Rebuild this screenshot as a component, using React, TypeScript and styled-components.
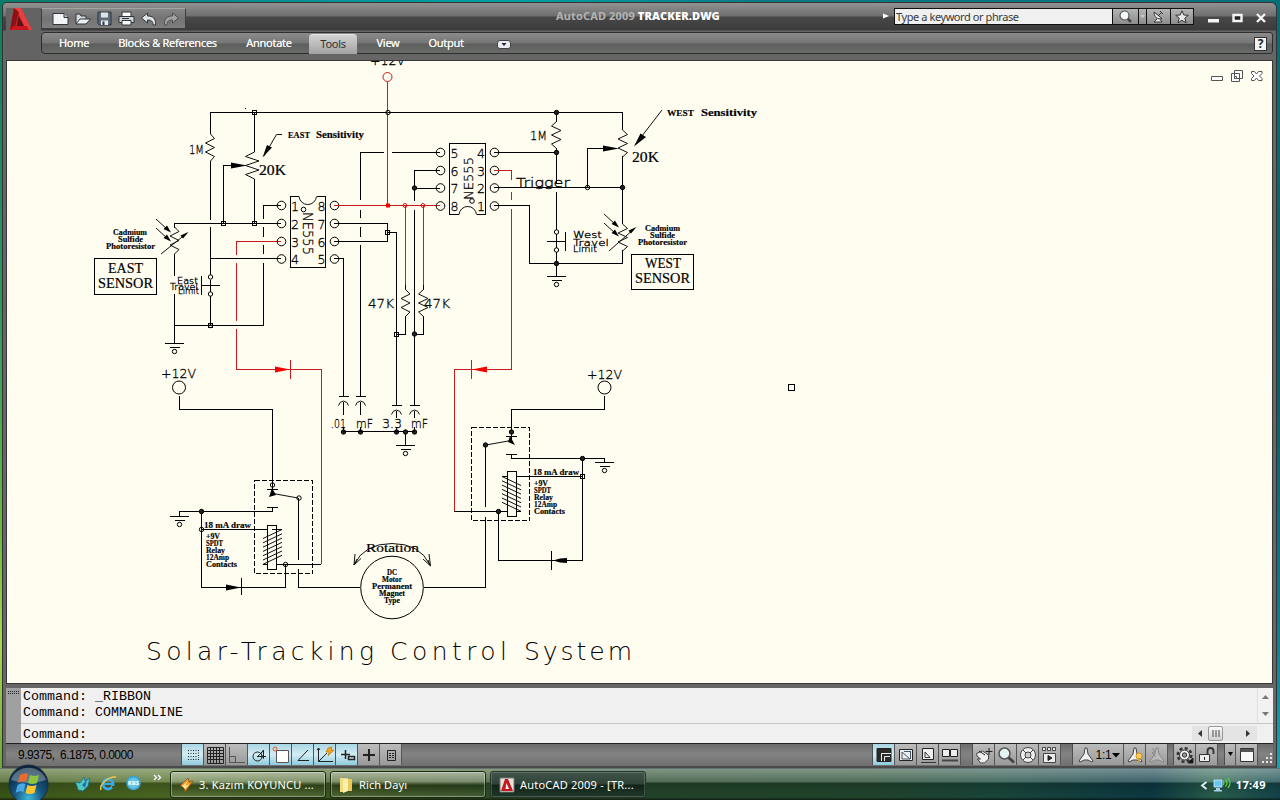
import React from 'react';
import styled, { createGlobalStyle, css } from 'styled-components';

const GlobalStyle = createGlobalStyle`
  * { box-sizing: border-box; }
  html, body { margin: 0; padding: 0; }
  body { width: 1280px; height: 800px; overflow: hidden; font-family: "Noto Sans", "Liberation Sans", sans-serif; }
`;

const Desktop = styled.div`
  width: 1280px;
  height: 800px;
  display: flex;
  flex-direction: column;
  background: linear-gradient(90deg, #0c7a68 0, #07898b 15%, #00a0a4 40%, #067a84 60%, #04707a 100%);
`;

const WindowRow = styled.div`
  flex: 1;
  display: flex;
  min-height: 0;
  padding-top: 2px;
`;

const LeftEdge = styled.div`
  width: 2px;
  background: linear-gradient(180deg, #0b7d60 0, #2a9a63 40%, #6dbb3f 70%, #a8d850 84%, #6fa83a 100%);
`;

const RightEdge = styled.div`
  width: 3px;
  background: linear-gradient(180deg, #04707a 0, #05606c 50%, #0a7c8c 80%, #1aa3ae 100%);
`;

const AppWindow = styled.div`
  flex: 1;
  min-width: 0;
  display: flex;
  flex-direction: column;
  background: #666;
  border: 1px solid #333;
  border-bottom: 2px solid #4a4a4a;
  border-radius: 5px 6px 0 0;
  padding: 0 3px;
`;

const Header = styled.div`
  height: 57px;
  display: flex;
  margin: 0 -3px;
  padding-left: 3px;
  background: linear-gradient(180deg, #929292 0, #6f6f6f 13px, #484848 14px, #3b3b3b 27px, #666 28px, #666 100%);
  border-radius: 4px 5px 0 0;
`;

const LogoCell = styled.div`
  width: 35px;
  height: 52px;
  margin-top: 5px;
  padding-left: 1px;
  background: #636363;
`;

const HeaderMain = styled.div`
  flex: 1;
  display: flex;
  flex-direction: column;
`;

const TitleBar = styled.div`
  height: 29px;
  display: flex;
  align-items: flex-start;
  padding: 5px 0 0 0;
`;

const QuickAccess = styled.div`
  width: 145px;
  height: 21px;
  display: flex;
  align-items: center;
  gap: 6px;
  padding-left: 10px;
  background: linear-gradient(180deg, #868686, #747474 50%, #7e7e7e);
  border: 1px solid #3e3e3e;
  border-top-color: #a5a5a5;
`;

const Glyph = styled.svg<{ $w: number; $h: number }>`
  width: ${p => p.$w}px;
  height: ${p => p.$h}px;
  display: block;
  flex: none;
  overflow: visible;
`;

const WindowTitle = styled.div`
  width: 166px;
  margin-left: 370px;
  font: bold 11px/15px "Noto Sans", sans-serif;
  letter-spacing: 0.14px;
  white-space: nowrap;
  color: #b4b4b4;
  b { color: #fff; }
`;

const SearchArrow = styled.div`
  margin: 5px 0 0 161px;
  width: 11px;
`;

const SearchBox = styled.div`
  height: 17px;
  display: flex;
  border: 1px solid #111;
  background: #111;
  gap: 1px;
`;

const SearchField = styled.div`
  width: 217px;
  background: #f0f0f0;
  padding-left: 1px;
  color: #3a3a3a;
  font: 11px/15px "Noto Sans", sans-serif;
  letter-spacing: -0.42px;
`;

const SearchButton = styled.div<{ $w: number }>`
  width: ${p => p.$w}px;
  display: flex;
  align-items: center;
  justify-content: center;
  background: linear-gradient(180deg, #b5b5b5, #8c8c8c);
`;

const CaptionButtons = styled.div`
  display: flex;
  gap: 13px;
  align-items: center;
  padding: 5px 0 0 14px;
`;

const TabBar = styled.div`
  height: 22px;
  display: flex;
  align-items: stretch;
  margin-right: 3px;
  border: 1px solid #2e2e2e;
  border-radius: 4px 3px 3px 4px;
  background: linear-gradient(180deg, #8b8b8b 0, #757575 10px, #5c5f5c 11px, #686b68 100%);
`;

const Tab = styled.div<{ $w: number; $active?: boolean }>`
  width: ${p => p.$w}px;
  text-align: center;
  font: 11px/19px "Noto Sans", sans-serif;
  letter-spacing: -0.28px;
  white-space: nowrap;
  color: #f5f5f5;
  text-shadow: 0 0 0.5px #fff;
  ${p => p.$active && css`
    color: #333;
    text-shadow: none;
    margin: 1px 0 -1px;
    line-height: 17px;
    border-radius: 4px 4px 0 0;
    background: linear-gradient(180deg, #d2d2d2, #a3a3a3);
    border-top: 1px solid #e6e6e6;
  `}
`;

const TabMenu = styled.div`
  margin: 7px 0 0 24px;
  width: 13px;
`;

const HelpSlot = styled.div`
  margin: 4px 5px 0 auto;
`;

const Canvas = styled.div`
  height: 624px;
  background: #fffcf0;
  border: 1px solid #383838;
  margin-bottom: 4px;
`;

const Sheet = styled.svg`
  display: block;
  width: 1265px;
  height: 622px;
`;

const CommandPanel = styled.div`
  height: 55px;
  display: flex;
  background: #f0f0f0;
`;

const CommandGrip = styled.div`
  width: 15px;
  background: #a0a0a0;
  padding: 2px 0 0 2px;
`;

const CommandBody = styled.div`
  flex: 1;
  display: flex;
  flex-direction: column;
`;

const mono = css`
  font: 13.33px/16px "Liberation Mono", monospace;
  color: #000;
  white-space: pre;
`;

const CommandHistory = styled.div`
  height: 37px;
  display: flex;
  justify-content: space-between;
  border-bottom: 1px solid #c6c6c6;
`;

const HistoryText = styled.div`
  ${mono}
  padding: 1px 0 0 2px;
`;

const CommandInput = styled.div`
  flex: 1;
  ${mono}
  display: flex;
  justify-content: space-between;
  padding: 3px 0 0 2px;
`;

const VScroll = styled.div`
  width: 16px;
  display: flex;
  flex-direction: column;
  justify-content: space-between;
  align-items: center;
  padding: 7px 0;
  border-left: 1px solid #e0e0e0;
  background: #f2f2f2;
`;

const HScroll = styled.div`
  width: 65px;
  height: 15px;
  margin: -1px 16px 0 0;
  display: flex;
  align-items: center;
  padding: 0 7px 0 6px;
  background: #e4e4e4;
`;

const HThumb = styled.div`
  width: 15px;
  height: 15px;
  margin: 0 auto 0 6px;
  border: 1px solid #999;
  border-radius: 2px;
  background: linear-gradient(180deg, #fafafa, #d0d0d0);
  display: flex;
  justify-content: center;
  align-items: center;
`;

const StatusBar = styled.div`
  height: 23px;
  display: flex;
  align-items: flex-start;
  border-top: 1px solid #222;
  background: linear-gradient(180deg, #6c6c6c, #838383 45%, #707070);
`;

const Coordinates = styled.div`
  width: 175px;
  padding: 3px 0 0 12px;
  font: 12px/17px "Liberation Sans", sans-serif;
  letter-spacing: -0.52px;
  white-space: pre;
  color: #000;
`;

const StatusGroup = styled.div<{ $gap: number }>`
  display: flex;
  margin-left: ${p => p.$gap}px;
  border-left: 1px solid #4e4e4e;
`;

const StatusButton = styled.div<{ $on?: boolean; $w?: number }>`
  width: ${p => p.$w ?? 22}px;
  height: 21px;
  display: flex;
  align-items: center;
  justify-content: center;
  font: 12px/20px "Liberation Sans", sans-serif;
  letter-spacing: -0.3px;
  border-right: 1px solid #555;
  background: ${p => p.$on ? 'linear-gradient(180deg, #a9d6e4, #d3edf4 50%, #8ecbdd)' : 'linear-gradient(180deg, #bcbcbc, #9a9a9a)'};
`;

const ResizeGrip = styled.div`
  margin: 9px 0 0 3px;
`;

const Taskbar = styled.div`
  height: 32px;
  display: flex;
  align-items: stretch;
  background:
    linear-gradient(180deg, #41505a 0, rgba(255,255,255,.42) 1px, rgba(255,255,255,.2) 14px, rgba(0,0,0,.22) 15px, rgba(0,0,0,.05) 29px, rgba(0,0,0,.6) 32px),
    linear-gradient(90deg, #3c591a 0, #4d6b23 12%, #3a561d 30%, #26482c 50%, #23482f 68%, #1b4a3e 78%, #0d3b45 90%, #2b6350 95%, #14474e 100%);
`;

const StartSlot = styled.div`
  width: 57px;
  padding-left: 8px;
  margin-top: -4px;
  z-index: 1;
`;

const QuickLaunch = styled.div`
  width: 113px;
  display: flex;
  gap: 9px;
  padding: 7px 0 0 17px;
`;

const TaskButton = styled.div<{ $active?: boolean; $ls?: number }>`
  width: 156px;
  height: 27px;
  margin: 3px 4px 0 0;
  padding: 0 0 0 8px;
  display: flex;
  align-items: center;
  gap: 5px;
  color: #fff;
  font: 11px/20px "Noto Sans", sans-serif;
  letter-spacing: ${p => p.$ls ?? 0}px;
  white-space: nowrap;
  border: 1px solid ${p => p.$active ? '#26352a' : '#182b10'};
  box-shadow: inset 0 0 0 1px ${p => p.$active ? 'rgba(255,255,255,.18)' : 'rgba(255,255,255,.35)'};
  border-radius: 3px;
  background: ${p => p.$active
    ? 'linear-gradient(180deg, #415448 0, #30433a 12px, #122318 13px, #20382a 100%)'
    : 'linear-gradient(180deg, rgba(255,255,255,.3) 0, rgba(255,255,255,.14) 12px, rgba(0,0,0,.15) 13px, rgba(255,255,255,.1) 100%)'};
`;

const Tray = styled.div`
  margin-left: auto;
  padding: 2px 14px 0 0;
  display: flex;
  align-items: center;
  gap: 5px;
  color: #fff;
  font: bold 11px/18px "Noto Sans", sans-serif;
  letter-spacing: 0.4px;
`;

/* ---------- schematic primitives ---------- */

const Ink = styled.path<{ $red?: boolean; $dash?: boolean }>`
  fill: none;
  stroke: ${p => (p.$red ? '#c8191c' : '#000')};
  stroke-width: 1;
  shape-rendering: crispEdges;
  stroke-dasharray: ${p => (p.$dash ? '5 2' : 'none')};
`;

const Slant = styled.path`
  fill: none;
  stroke: #111;
  stroke-width: 1;
`;

const Solid = styled.path<{ $red?: boolean }>`
  fill: ${p => (p.$red ? '#f40000' : '#000')};
`;

const Ring = styled.circle<{ $red?: boolean; $fill?: boolean }>`
  fill: ${p => (p.$fill ? '#222' : 'none')};
  stroke: ${p => (p.$red ? '#c8191c' : '#000')};
  stroke-width: 1;
`;

type Face = 'stroke' | 'serif' | 'bold' | 'title';

const Lettering = styled.text<{ $face: Face; $size: number }>`
  font-size: ${p => p.$size}px;
  fill: #000;
  ${p => p.$face === 'stroke' && css`font-family: "DejaVu Sans Light", "DejaVu Sans", sans-serif; font-weight: 200; stroke: #000; stroke-width: 0.3px;`}
  ${p => p.$face === 'title' && css`font-family: "DejaVu Sans Light", "DejaVu Sans", sans-serif; font-weight: 200;`}
  ${p => p.$face === 'serif' && css`font-family: "Liberation Serif", serif; stroke: #000; stroke-width: 0.2px;`}
  ${p => p.$face === 'bold' && css`font-family: "Liberation Serif", serif; font-weight: 700; stroke: #000; stroke-width: 0.15px;`}
`;

interface LabelProps { x: number; y: number; w: number; s: number; face?: Face; rot?: number; children: string; }

const Label = ({ x, y, w, s, face = 'stroke', rot, children }: LabelProps) => (
  <Lettering $face={face} $size={s} x={x} y={y} textLength={w}
    lengthAdjust={face === 'title' ? 'spacing' : 'spacingAndGlyphs'}
    transform={rot ? `rotate(${rot} ${x} ${y})` : undefined}>{children}</Lettering>
);

const Box = ({ x, y }: { x: number; y: number }) => <Ink d={`M${x - 2} ${y - 2}h4v4h-4z`} />;
const Node = ({ x, y, fill }: { x: number; y: number; fill?: boolean }) => <Ring cx={x} cy={y} r={2.2} $fill={fill} />;

const Ground = ({ x, y }: { x: number; y: number }) => (
  <>
    <Ink d={`M${x - 9.5} ${y}h19M${x - 5} ${y + 4}h10`} />
    <Ring cx={x} cy={y + 8} r={2.2} />
  </>
);

const zig = (x: number, y: number, a: number, b: number, step = 4.5) =>
  `M${x} ${y}L${x + a} ${y + step}L${x + b} ${y + 2 * step}L${x + a} ${y + 3 * step}L${x + b} ${y + 4 * step}L${x + a} ${y + 5 * step}L${x} ${y + 6 * step}`;

const PINS = [205.5, 223.5, 241.5, 259];
const PINS_W = [152.5, 170.5, 188, 206];

const EastSide = () => (
  <g>
    <Ink d="M210.5 134V112.5H622.5V130M210.5 161V220M210.5 227V275M210.5 280V292M210.5 296V325M254.5 112V152M254.5 179V223M223.5 223V165.5H232" />
    <Slant d={zig(210.5, 134, 4, -5)} />
    <Slant d={zig(254.5, 152, -9, 4.5)} />
    <Solid d="M231 162.500L247 165.500L231 168.500zM262.500 157.500L267 145L272 147.500zM245 108h1v1h-1z" />
    <Slant d="M282 134.500H276.500L264 156" />
    <Box x={254.5} y={112.5} /><Box x={223.5} y={223.5} /><Box x={254.5} y={223.5} />
    <Label x={189} y={153.5} w={15} s={13}>1M</Label>
    <Label x={259} y={175} w={27} s={14} face="serif">20K</Label>
    <Label x={288} y={138} w={22} s={9} face="bold">EAST</Label>
    <Label x={316} y={138} w={48} s={9.5} face="bold">Sensitivity</Label>
    <Ink d="M174.500 228V223.500H281M281 205.500H263.500V219M263.500 227V237M263.500 245V254M263.500 263V325.500H174.500M281 258.500H210.500" />
    <Slant d={zig(174.5, 227, 4.5, -4.5)} />
    <Ink d="M174.500 254V276M174.500 294V343" />
    <Slant d="M156 219L168 230M156 228L168 239M161 254L187 233" />
    <Solid d="M171 232.500L163.500 229L167 225.500zM171 241.500L163.500 238L167 234.500zM188.500 232L183 238.500L180.500 235.500z" />
    <Ground x={174.5} y={343.5} />
    <Label x={113} y={235} w={34} s={7.5} face="bold">Cadmium</Label>
    <Label x={118} y={242} w={25} s={7.5} face="bold">Sulfide</Label>
    <Label x={106} y={249} w={49} s={7.5} face="bold">Photoresistor</Label>
    <Ink d="M94.500 258.500h62v36h-62z" />
    <Label x={108} y={273} w={35} s={14.5} face="serif">EAST</Label>
    <Label x={98} y={287.5} w={55} s={14.5} face="serif">SENSOR</Label>
    <Node x={210.5} y={277} /><Node x={210.5} y={294} />
    <Ink d="M201.500 276V295M201.500 285.500H220" />
    <Node x={210.5} y={325.5} /><Box x={210.5} y={325.5} />
    <Label x={177} y={283.5} w={21} s={9}>East</Label>
    <Label x={170} y={289.5} w={28} s={9}>Travel</Label>
    <Label x={178} y={294} w={21} s={9}>Limit</Label>
    <Ink $red d="M281 241.500H236.500V255M236.500 263V321M236.500 329V369.500H321.500V564M290.500 360V379" />
    <Solid $red d="M275 366.500L290 369.500L275 372.500z" />
    <Ink d="M299 196.500H290.500V267.500H325.500V196.500H316.500" />
    <Slant d="M299 196.500A8.800 9 0 0 0 316.500 196.500" />
    <Ring cx={303.5} cy={209.5} r={2.3} />
    {PINS.map((y, i) => (
      <g key={y}>
        <Ring cx={281.5} cy={y} r={4.3} /><Ring cx={334.5} cy={y} r={4.3} />
        <Label x={291} y={y + 5} w={8} s={13}>{String(i + 1)}</Label>
        <Label x={317.5} y={y + 5} w={8} s={13}>{String(8 - i)}</Label>
      </g>
    ))}
    <Label x={303} y={212} w={43} s={14} rot={90}>NE555</Label>
  </g>
);

const Middle = () => (
  <g>
    <Label x={370} y={65} w={35} s={13}>+12V</Label>
    <Ring $red cx={387.5} cy={77} r={4.5} />
    <Ink $red d="M387.500 82V205M334 205.500H440M405.500 206V285M423.500 206V285" />
    <Node x={388} y={112.5} />
    <Solid $red d="M386 203.500h4v4h-4z" />
    <Ring $red cx={405} cy={205.5} r={2} /><Ring $red cx={423} cy={205.5} r={2} />
    <Ink d="M334 223.500H387.500V241.500H334M387.500 232.500H396.500V405M334 258.500H343.500V396M440 152.500H392M384 152.500H360.500V200M360.500 210V218M360.500 227V237M360.500 245V396M440 170.500H414.500V201M414.500 188.500H440M414.500 210V405" />
    <Box x={387.5} y={232.5} /><Node x={414.5} y={188} fill />
    <Ink d="M405.500 285V290M405.500 316V334.500H396.500M423.500 285V290M423.500 316V334.500H414.500" />
    <Slant d={zig(405.5, 289.5, 4.5, -4.5)} />
    <Slant d={zig(423.5, 289.5, -5, 4.5)} />
    <Box x={396.5} y={334.5} /><Node x={414.5} y={334} fill />
    <Label x={368} y={308} w={26} s={13}>47K</Label>
    <Label x={424} y={308} w={26} s={13}>47K</Label>
    {[[343.5, 396.5], [360.5, 396.5], [396.5, 405.5], [414.5, 405.5]].map(([x, y]) => (
      <g key={x}>
        <Ink d={`M${x - 5} ${y}h10M${x} ${y + 5}V${y < 400 ? 415 : 418}M${x} 427V432`} />
        <Slant d={`M${x - 5} ${y + 9}Q${x - 4} ${y + 5} ${x} ${y + 4.5}Q${x + 4} ${y + 5} ${x + 5} ${y + 9}`} />
        <Node x={x} y={432} fill />
      </g>
    ))}
    <Ink d="M343 431.500H414.500M405.500 432V445" />
    <Node x={405.5} y={432} fill />
    <Ground x={405.5} y={445.5} />
    <Label x={331} y={428} w={15} s={13}>.01</Label>
    <Label x={356} y={428} w={17} s={13}>mF</Label>
    <Label x={382} y={428} w={20} s={13}>3.3</Label>
    <Label x={411} y={428} w={17} s={13}>mF</Label>
  </g>
);

const WestSide = () => (
  <g>
    <Ink d="M459 214.500H449.500V143.500H485.500V214.500H476.500" />
    <Slant d="M459 214.500A8.800 9 0 0 1 476.500 214.500" />
    <Ring cx={472} cy={201} r={2.3} />
    {PINS_W.map((y, i) => (
      <g key={y}>
        <Ring cx={440.5} cy={y} r={4.3} /><Ring cx={494.5} cy={y} r={4.3} />
        <Label x={450.5} y={y + 5} w={8} s={13}>{String(5 + i)}</Label>
        <Label x={477} y={y + 5} w={8} s={13}>{String(4 - i)}</Label>
      </g>
    ))}
    <Label x={472.5} y={200} w={43} s={13} rot={-90}>NE555</Label>
    <Ink d="M494 152.500H556.500V183M556.500 113V122M556.500 148V153M556.500 192V230M494 187.500H622.500M494 205.500H529.500V263.500H622.500V250M587.500 187V148.500H604M622.500 156V224M556.500 234V248M556.500 252V276" />
    <Slant d={zig(556.5, 121.5, -5, 4.5)} />
    <Slant d={zig(622.5, 130, 5, -4.5)} />
    <Slant d={zig(622.5, 224, 5, -4.5)} />
    <Node x={556.5} y={112.5} fill /><Node x={556.5} y={152.5} fill /><Node x={587.5} y={187.5} /><Node x={622.5} y={187.5} fill />
    <Label x={530} y={140} w={17} s={13}>1M</Label>
    <Label x={516} y={187} w={54} s={13}>Trigger</Label>
    <Solid d="M603 145.500L619 148.500L603 151.500zM634 146.500L640.500 133.500L646 137z" />
    <Slant d="M662 110L635 145" />
    <Label x={632} y={161.5} w={27} s={14} face="serif">20K</Label>
    <Label x={667} y={116} w={27} s={9} face="bold">WEST</Label>
    <Label x={701} y={116} w={56} s={9.5} face="bold">Sensitivity</Label>
    <Node x={556.5} y={232} /><Node x={556.5} y={250} />
    <Ink d="M565.500 232V251M547 241.500H565" />
    <Node x={556.5} y={263.5} fill />
    <Ground x={556.5} y={276.5} />
    <Label x={573} y={238} w={29} s={9}>West</Label>
    <Label x={573} y={245.5} w={36} s={9}>Travel</Label>
    <Label x={573} y={252} w={24} s={9}>Limit</Label>
    <Slant d="M604 214L616 225M604 223L616 234M609 251L635 228" />
    <Solid d="M619 227.500L611.500 224L615 220.500zM619 236.500L611.500 233L615 229.500zM636.500 227L631 233.500L628.500 230.500z" />
    <Label x={645} y={230.5} w={35} s={7.5} face="bold">Cadmium</Label>
    <Label x={650} y={238} w={25} s={7.5} face="bold">Sulfide</Label>
    <Label x={638} y={245} w={49} s={7.5} face="bold">Photoresistor</Label>
    <Ink d="M631.500 254.500h62v35h-62z" />
    <Label x={645} y={268} w={36} s={14.5} face="serif">WEST</Label>
    <Label x={635} y={283} w={55} s={14.5} face="serif">SENSOR</Label>
    <Ink $red d="M494 170.500H511.500V180M511.500 192V200M511.500 209V369.500H454.500V511M471.500 360V379" />
    <Solid $red d="M487 366.500L472 369.500L487 372.500z" />
  </g>
);

const RELAY_TEXT = ['+9V', 'SPDT', 'Relay', '12Amp', 'Contacts'];
const RELAY_W = [14, 17, 19, 23, 31];

const RelayEast = () => (
  <g>
    <Label x={161} y={378} w={35} s={13}>+12V</Label>
    <Ring cx={179} cy={387.5} r={6.5} />
    <Ink d="M179.500 396V409.500H272.500V493M267 489.500H278M267 507.500H278M272.500 507V511.500H179.500V516M201.500 511V587.500H285.500V564M201.500 529.500H267M276.500 564.500H321M298.500 498V560M298.500 569V587.500H360" />
    <Ink $dash d="M254.500 480.500h58v93h-58z" />
    <Ink d="M267.500 525.500h9v44h-9z" />
    <Slant d="M273 493.500L298 498" />
    <Solid d="M272 488L276 495L269 497zM226 584.500L241 587.500L226 590.500z" />
    <Ink d="M241.500 578V595" />
    <Node x={272.5} y={485} /><Node x={299} y={498} /><Node x={201.5} y={511.5} fill /><Node x={201.5} y={529.5} /><Node x={285.5} y={564.5} />
    <Ground x={179.5} y={516.5} />
    {[0, 1, 2, 3, 4, 5, 6].map(i => <Slant key={i} d={`M263 ${538.5 + i * 4.3}L282 ${529.5 + i * 4.3}`} />)}
    <Ink d="M272 529.500h10M263 564.500h5" />
    <Label x={204} y={528} w={47} s={8.5} face="bold">18 mA draw</Label>
    {RELAY_TEXT.map((t, i) => <Label key={t} x={206} y={538.5 + i * 7.1} w={RELAY_W[i]} s={7.5} face="bold">{t}</Label>)}
  </g>
);

const RelayWest = () => (
  <g>
    <Label x={587} y={378.5} w={35} s={13}>+12V</Label>
    <Ring cx={604.5} cy={387.5} r={6.5} />
    <Ink d="M604.500 396V409.500H511.500V440M506 436.500H517M506 454.500H517M511.500 454V458.500H604.500V462M582.500 458V560.500H498.500V512M516.500 476.500H582M454 511.500H507M485.500 445V507M485.500 517V587.500H424M551.500 551V570" />
    <Ink $dash d="M471.500 427.500h58v93h-58z" />
    <Ink d="M507.500 471.500h9v45h-9z" />
    <Slant d="M511 440.500L486 445" />
    <Solid d="M510 436L515 445L508 442zM553 560.500L560 558.500L567 558V563L560 562.500z" />
    <Node x={511.5} y={432} fill /><Node x={485.5} y={445} fill /><Node x={582.5} y={458.5} fill /><Node x={498.5} y={511.5} fill />
    <Box x={582.5} y={476.5} />
    <Ground x={604.5} y={462.5} />
    {[0, 1, 2, 3, 4, 5, 6].map(i => <Slant key={i} d={`M502 ${476.5 + i * 4.3}L521 ${485.5 + i * 4.3}`} />)}
    <Ink d="M502 476.500h6M516 511.500h5" />
    <Label x={533} y={474.5} w={46} s={8.5} face="bold">18 mA draw</Label>
    {RELAY_TEXT.map((t, i) => <Label key={t} x={534} y={485.5 + i * 7.1} w={RELAY_W[i]} s={7.5} face="bold">{t}</Label>)}
  </g>
);

const Motor = () => (
  <g>
    <Ring cx={392} cy={587.5} r={31.3} />
    <Label x={387} y={574.5} w={10} s={7.5} face="bold">DC</Label>
    <Label x={382} y={581.5} w={20} s={7.5} face="bold">Motor</Label>
    <Label x={372} y={589} w={40} s={7.5} face="bold">Permanent</Label>
    <Label x={379} y={596} w={26} s={7.5} face="bold">Magnet</Label>
    <Label x={384} y={603} w={16} s={7.5} face="bold">Type</Label>
    <Label x={366} y={552} w={53} s={13} face="serif">Rotation</Label>
    <Slant d="M354 565Q364 543.500 392 543.500Q420 543.500 430 565M355 554L354 565L361 558.500M357 559L354 565M429 554L430.500 566L423 559M428 560L430 565" />
    <Label x={146} y={660} w={228} s={25} face="title">Solar-Tracking</Label>
    <Label x={390} y={660} w={117} s={25} face="title">Control</Label>
    <Label x={524} y={660} w={108} s={25} face="title">System</Label>
  </g>
);

const MdiButtons = () => (
  <g fill="#fff" stroke="#555" strokeWidth="1">
    <path d="M1211.500 76.500h11v4h-11z" />
    <path d="M1234.500 70.500h8v8h-8zM1231.500 73.500h8v8h-8z" />
    <path d="M1234.500 76.500h2v2h-2z" />
    <path d="M1251.500 71.500h3l2 2.500l2-2.500h3.500v2l-2.500 2.500l2.500 2.500v2h-3.500l-2-2.500l-2 2.500h-3v-2l2.500-2.500l-2.500-2.500z" />
  </g>
);

/* ---------- toolbar glyphs ---------- */

const dk = '#2f353c';

const QuickIcons = () => (
  <>
    <Glyph $w={17} $h={14} viewBox="0 0 17 14"><path d="M1 1.500h11l4 4v7H1z" fill="#f2f4f6" stroke={dk} /><path d="M12 1.500v4h4" fill="#bcc3ca" stroke={dk} /></Glyph>
    <Glyph $w={16} $h={14} viewBox="0 0 16 14"><path d="M1 12V2h4l1 2h5v3" fill="#d5dade" stroke={dk} /><path d="M1 12L5 7h10.500L11 12z" fill="#eef1f3" stroke={dk} /></Glyph>
    <Glyph $w={15} $h={15} viewBox="0 0 15 15"><path d="M1 1h13v13H2.500L1 12.500z" fill="#5d6a78" stroke={dk} /><path d="M4 1.500h7v5H4z" fill="#dde3e8" /><path d="M4 9.500h7V14H4z" fill="#e8ecef" /><path d="M5.500 10.500h2V14h-2z" fill={dk} /></Glyph>
    <Glyph $w={17} $h={15} viewBox="0 0 17 15"><path d="M4 1h9v5H4z" fill="#fff" stroke={dk} /><path d="M1 5.500h15v6H1z" fill="#cfd4d8" stroke={dk} /><path d="M4 9.500h9V14H4z" fill="#fff" stroke={dk} /><path d="M4 7.500h7" stroke={dk} /></Glyph>
    <Glyph $w={16} $h={14} viewBox="0 0 16 14"><path d="M.5 6l6-5v3c5 0 8.500 2 8 9h-2.500c0-4-2-5-5.500-5v3z" fill="#dfe4e8" stroke={dk} /></Glyph>
    <Glyph $w={16} $h={14} viewBox="0 0 16 14"><path d="M15.500 6l-6-5v3c-5 0-8.500 2-8 9h2.500c0-4 2-5 5.500-5v3z" fill="#a2a2a2" stroke="#4e4e4e" /></Glyph>
  </>
);

const LogoMark = () => (
  <Glyph $w={35} $h={22} viewBox="0 0 35 22">
    <path d="M7 0h7l11 22H3z" fill="#d3262b" />
    <path d="M7 0L3 22h4L12 4z" fill="#8e1014" />
    <path d="M7 0h7l11 22h-6L11 3z" fill="#e8403f" />
    <path d="M11.500 8l6 11H9.500z" fill="#5a1416" />
    <path d="M3 22l3-4h14l2 4z" fill="#c8181d" />
  </Glyph>
);

const leftStatus: { on?: boolean; icon: React.ReactNode }[] = [
  { on: true, icon: <path d="M5 5.500h9M5 8.500h9M5 11.500h9M5 14.500h11M15.500 5v8" strokeDasharray="1 1.500" /> },
  { icon: <path d="M2.500 2.500h16v16h-16zM5.500 2v16M8.500 2v16M11.500 2v16M14.500 2v16M2 5.500h16M2 8.500h16M2 11.500h16M2 14.500h16" /> },
  { icon: <path d="M2.500 2v15.500H18M2.500 11.500h6v6" stroke="#555" /> },
  { on: true, icon: <><circle cx="8.500" cy="11.500" r="4.500" /><path d="M8 11.500h9M8.500 11.500l6.500-6.500M12 8.500l2.500 5V5z" /></> },
  { on: true, icon: <><path d="M5.500 5.500h12v12h-12z" fill="#fff" stroke="#555" /><circle cx="4" cy="4" r="2" stroke="#e0582a" /></> },
  { on: true, icon: <path d="M15 5L5 15.500h11" /> },
  { on: true, icon: <><path d="M3.500 3v13.500H18M3.500 16.500L12 8M2 5l1.500-2L5 5" /><path d="M13 3l4-1l-1 3h3l-6 6l1-4h-3z" fill="#f7a51e" stroke="#b56b05" strokeWidth=".6" /></> },
  { on: true, icon: <path d="M4 9.500h9M8.500 5v9M11.500 11.500h6v3h-6z" strokeWidth="1.500" /> },
  { icon: <path d="M4 10h12M10 4v12" strokeWidth="2" /> },
  { icon: <path d="M6.500 5.500h8v10h-8zM8 8.500h2M11 8.500h2M8 10.500h2M11 10.500h2M8 12.500h2M11 12.500h2" /> },
];

const rightViews: { on?: boolean; icon: React.ReactNode }[] = [
  { on: true, icon: <><path d="M3 3.500h14v13H3z" fill="#2a2a2a" /><path d="M7.500 16V8.500H17M10.500 16v-4.500H16" stroke="#eee" /></> },
  { icon: <><path d="M3.500 4.500h13v11h-13z" fill="#eee" /><path d="M6 7l8 7M6 14V7M6 14h8M8 6.500h7M14.500 7v7" stroke="#456" /></> },
  { icon: <><path d="M4.500 3.500h11v11h-11z" fill="#eee" /><path d="M7 7l5 5.500H7zM3 17.500h15" stroke="#333" /></> },
  { icon: <><path d="M2.500 4.500h7v7h-7zM10.500 4.500h7v7h-7z" fill="#eee" /><path d="M2 15.500h16" strokeWidth="2" stroke="#444" /></> },
];

const rightNav: { icon: React.ReactNode }[] = [
  { icon: <><path d="M2.500 8.500l6-2.500l6 4v4l-4 4H6.500L3.500 14h3L3 11z" fill="#eee" stroke="#444" /><path d="M15 3v7M11.500 6.500h7M5 6l6 4" /></> },
  { icon: <><path d="M12 12l6 5.500" strokeWidth="3" stroke="#444" /><circle cx="8.500" cy="8.500" r="5.500" fill="#e6f2f4" stroke="#555" strokeWidth="1.500" /></> },
  { icon: <><circle cx="10" cy="10" r="7.500" fill="#eee" stroke="#444" /><circle cx="10" cy="10" r="3" fill="#ccc" stroke="#444" /><path d="M5 5l3 3M15 5l-3 3M5 15l3-3M15 15l-3-3" stroke="#444" /></> },
  { icon: <><path d="M2.500 2.500h3v3h-3zM7.500 2.500h3v3h-3zM12.500 2.500h3v3h-3zM3.500 8.500h12v9h-12z" fill="#eee" stroke="#444" /><path d="M8 10.500l4 2.500l-4 2.500z" fill="#222" /></> },
];

const Compass = ({ mute }: { mute?: boolean }) => (
  <path d="M9 3h2l1 6l5 7l-1 1l-4-2h-4l-4 2l-1-1l5-7z" fill={mute ? '#bbb' : '#f0f0f0'} stroke={mute ? '#888' : '#444'} />
);

const Btn = ({ on, w, children }: { on?: boolean; w?: number; children: React.ReactNode }) => (
  <StatusButton $on={on} $w={w}>
    <Glyph $w={20} $h={20} viewBox="0 0 20 20" fill="none" stroke="#222">{children}</Glyph>
  </StatusButton>
);

const Status = () => (
  <StatusBar>
    <Coordinates>9.9375,  6.1875, 0.0000</Coordinates>
    <StatusGroup $gap={0}>{leftStatus.map((b, i) => <Btn key={i} on={b.on}>{b.icon}</Btn>)}</StatusGroup>
    <StatusGroup $gap={470}>{rightViews.map((b, i) => <Btn key={i} on={b.on}>{b.icon}</Btn>)}</StatusGroup>
    <StatusGroup $gap={11}>{rightNav.map((b, i) => <Btn key={i}>{b.icon}</Btn>)}</StatusGroup>
    <StatusGroup $gap={11}>
      <StatusButton $w={51}>
        <Glyph $w={20} $h={20} viewBox="0 0 20 20"><Compass /></Glyph>
        1:1
        <Glyph $w={9} $h={6} viewBox="0 -1 9 6"><path d="M1 0h8L5 4.500z" /></Glyph>
      </StatusButton>
      <Btn><Compass /><circle cx="14" cy="11" r="3" fill="#ffd35a" stroke="#e08a12" /><path d="M14 13v4" stroke="#d9a020" strokeWidth="2" /></Btn>
      <Btn><Compass mute /><path d="M5 3l3 4l-3 1l4 4" stroke="#888" /></Btn>
    </StatusGroup>
    <StatusGroup $gap={5}>
      <Btn>
        <circle cx="9.500" cy="10" r="6.800" stroke="#333" strokeWidth="2.500" strokeDasharray="3 2.340" />
        <circle cx="9.500" cy="10" r="5" fill="#eee" stroke="#333" /><circle cx="9.500" cy="10" r="2.200" fill="#999" stroke="#333" />
        <path d="M18 13v5h-5z" fill="#111" />
      </Btn>
      <Btn><path d="M2.500 9.500h10v7h-10z" fill="#eee" stroke="#333" /><path d="M10.500 9V6a3 3 0 0 1 6 0v3" stroke="#333" strokeWidth="1.800" /><path d="M7.500 12v3" /></Btn>
    </StatusGroup>
    <StatusGroup $gap={6}>
      <StatusButton $w={11}><Glyph $w={7} $h={5} viewBox="0 0 7 5"><path d="M1 0h5L3.500 4z" /></Glyph></StatusButton>
      <Btn><path d="M3.500 3.500h13v13h-13z" fill="#fafafa" stroke="#333" /><path d="M3.500 5.500h13" stroke="#555" strokeWidth="3" /></Btn>
    </StatusGroup>
    <ResizeGrip>
      <Glyph $w={12} $h={12} viewBox="0 0 12 12" fill="#e8e8e8"><path d="M9 0h2v2H9zM5 4h2v2H5zM9 4h2v2H9zM1 8h2v2H1zM5 8h2v2H5zM9 8h2v2H9z" /></Glyph>
    </ResizeGrip>
  </StatusBar>
);

const AutocadIcon = () => (
  <Glyph $w={16} $h={16} viewBox="0 0 16 16"><path d="M1 1h14v14H1z" fill="#e9e4e0" stroke="#777" /><path d="M6 2h3l5 12H2z" fill="#c6181d" /><path d="M7.500 6l2.500 6H6.500z" fill="#fff" /></Glyph>
);

const App = () => (
  <>
    <GlobalStyle />
    <Desktop>
      <WindowRow>
        <LeftEdge />
        <AppWindow>
          <Header>
            <LogoCell><LogoMark /></LogoCell>
            <HeaderMain>
              <TitleBar>
                <QuickAccess><QuickIcons /></QuickAccess>
                <WindowTitle>AutoCAD 2009 <b>TRACKER.DWG</b></WindowTitle>
                <SearchArrow><Glyph $w={6} $h={6} viewBox="0 0 6 6"><path d="M0 .5l6 2.500l-6 2.500z" fill="#fff" /></Glyph></SearchArrow>
                <SearchBox>
                  <SearchField>Type a keyword or phrase</SearchField>
                  <SearchButton $w={25}>
                    <Glyph $w={13} $h={13} viewBox="0 0 13 13"><path d="M8 8l4 4" stroke="#444" strokeWidth="2.500" /><circle cx="5.500" cy="5.500" r="4.500" fill="#f4fafa" stroke="#555" strokeWidth="1.200" /></Glyph>
                  </SearchButton>
                  <SearchButton $w={7}><Glyph $w={5} $h={3} viewBox="0 0 5 3"><path d="M0 0h5L2.500 3z" fill="#ccc" /></Glyph></SearchButton>
                  <SearchButton $w={23}>
                    <Glyph $w={13} $h={13} viewBox="0 0 13 13" fill="#eee" stroke="#333"><path d="M2 2c0 5 4 8 8 6.500zM5 9l-3 3h8l-2-3M6 6l4-4M8 1l3 3" /></Glyph>
                  </SearchButton>
                  <SearchButton $w={22}>
                    <Glyph $w={14} $h={14} viewBox="0 0 14 14"><path d="M7 .8l1.800 4.200l4.500.3l-3.500 2.900l1.200 4.600L7 10.300l-4 2.500l1.200-4.600L.7 5.300L5.200 5z" fill="#e8e8e8" stroke="#333" /></Glyph>
                  </SearchButton>
                </SearchBox>
                <CaptionButtons>
                  <Glyph $w={11} $h={10} viewBox="0 0 11 10"><path d="M0 6h11v3.500H0z" fill="#f5f5f5" /></Glyph>
                  <Glyph $w={11} $h={10} viewBox="0 0 11 10"><path d="M1.500 2h8v6h-8z" fill="#222" stroke="#f5f5f5" strokeWidth="2.400" /></Glyph>
                  <Glyph $w={10} $h={10} viewBox="0 0 10 10"><path d="M1 1l8 8M9 1l-8 8" stroke="#f5f5f5" strokeWidth="2.400" /></Glyph>
                </CaptionButtons>
              </TitleBar>
              <TabBar>
                <Tab $w={64}>Home</Tab>
                <Tab $w={123}>Blocks &amp; References</Tab>
                <Tab $w={80}>Annotate</Tab>
                <Tab $w={48} $active>Tools</Tab>
                <Tab $w={62}>View</Tab>
                <Tab $w={54}>Output</Tab>
                <TabMenu>
                  <Glyph $w={14} $h={9} viewBox="0 0 14 9"><rect x=".5" y=".5" width="13" height="8" rx="2.500" fill="#e8ecf2" stroke="#444" /><path d="M4.500 3h5L7 6z" fill="#222" /></Glyph>
                </TabMenu>
                <HelpSlot>
                  <Glyph $w={13} $h={14} viewBox="0 0 13 14">
                    <rect x=".5" y=".5" width="12" height="13" fill="#f2f4f6" stroke="#333" />
                    <text x="6.500" y="11.300" textAnchor="middle" fontFamily="Noto Sans" fontWeight="700" fontSize="12" fill="#222">?</text>
                  </Glyph>
                </HelpSlot>
              </TabBar>
            </HeaderMain>
          </Header>
          <Canvas>
            <Sheet viewBox="7 61 1265 622">
              <EastSide />
              <Middle />
              <WestSide />
              <RelayEast />
              <RelayWest />
              <Motor />
              <Ink d="M788.500 384.500h6v6h-6z" />
              <MdiButtons />
            </Sheet>
          </Canvas>
          <CommandPanel>
            <CommandGrip>
              <Glyph $w={12} $h={4} viewBox="0 0 12 4"><path d="M0 1.500h12M0 3.500h12" stroke="#222" strokeDasharray="1 1" /></Glyph>
            </CommandGrip>
            <CommandBody>
              <CommandHistory>
                <HistoryText>{'Command: _RIBBON\nCommand: COMMANDLINE'}</HistoryText>
                <VScroll>
                  <Glyph $w={7} $h={4} viewBox="0 0 7 4"><path d="M0 4h7L3.500 0z" fill="#777" /></Glyph>
                  <Glyph $w={7} $h={4} viewBox="0 0 7 4"><path d="M0 0h7L3.500 4z" fill="#777" /></Glyph>
                </VScroll>
              </CommandHistory>
              <CommandInput>
                Command:
                <HScroll>
                  <Glyph $w={4} $h={7} viewBox="0 0 4 7"><path d="M4 0v7L0 3.500z" fill="#333" /></Glyph>
                  <HThumb><Glyph $w={8} $h={7} viewBox="0 0 8 7"><path d="M1 0v7M4 0v7M7 0v7" stroke="#444" /></Glyph></HThumb>
                  <Glyph $w={4} $h={7} viewBox="0 0 4 7"><path d="M0 0v7l4-3.500z" fill="#333" /></Glyph>
                </HScroll>
              </CommandInput>
            </CommandBody>
          </CommandPanel>
          <Status />
        </AppWindow>
        <RightEdge />
      </WindowRow>
      <Taskbar>
        <StartSlot>
          <Glyph $w={42} $h={36} viewBox="0 0 42 36">
            <defs>
              <radialGradient id="orb" cx=".5" cy=".85" r=".8">
                <stop offset="0" stopColor="#3fb7dc" /><stop offset=".45" stopColor="#17557f" /><stop offset="1" stopColor="#0b2238" />
              </radialGradient>
              <clipPath id="orbClip"><path d="M0 0h42v36H0z" /></clipPath>
            </defs>
            <g clipPath="url(#orbClip)">
              <circle cx="20.500" cy="20.500" r="19.500" fill="url(#orb)" stroke="#1a2e40" />
              <path d="M3 16a18 16 0 0 1 35 0q-17 6-35 0z" fill="#fff" opacity=".3" />
              <path d="M12 11q5-3 8-1l-2 8q-4-2-8 1z" fill="#ee6a2c" />
              <path d="M22 11q4 2 9 0l-2 8q-5 2-9 0z" fill="#8cc63f" />
              <path d="M9.500 21q4-3 8-1l-2 8q-4-2-8 1z" fill="#49a8e8" />
              <path d="M19.500 21q4 2 9 0l-2 8q-5 2-9 0z" fill="#fbc52d" />
            </g>
          </Glyph>
        </StartSlot>
        <QuickLaunch>
          <Glyph $w={17} $h={17} viewBox="0 0 17 17"><path d="M1 7l5 1l4-6l1 4l5-3l-2 8l-5 5l-5-1l-1-4z" fill="#4fc8c0" stroke="#176a8a" strokeWidth=".8" /><path d="M8 10l5-5l-2 8z" fill="#2468b8" /></Glyph>
          <Glyph $w={17} $h={17} viewBox="0 0 17 17"><circle cx="8" cy="9" r="5" fill="none" stroke="#35a8ee" strokeWidth="3" /><path d="M4 9h9" stroke="#35a8ee" strokeWidth="2" /><path d="M12 11h5v2h-5z" fill="#41591e" /><path d="M1 15C-1 10 8 1 16 2" fill="none" stroke="#f3c54a" strokeWidth="1.500" /></Glyph>
          <Glyph $w={16} $h={16} viewBox="0 0 16 16"><circle cx="7.500" cy="8" r="7.300" fill="#3aa2cf" /><circle cx="7.500" cy="8" r="5.600" fill="#68c3e2" /><text x="7.500" y="10.300" textAnchor="middle" fontFamily="Noto Sans" fontWeight="700" fontSize="6" fill="#fff">KBS</text></Glyph>
          <Glyph $w={8} $h={6} viewBox="-6 0 8 6"><path d="M-3 0l2.500 2.500L-3 5M1 0l2.500 2.500L1 5" fill="none" stroke="#fff" strokeWidth="1.300" /></Glyph>
        </QuickLaunch>
        <TaskButton $ls={0.22}>
          <Glyph $w={15} $h={16} viewBox="0 0 15 16"><path d="M1 9l8-8l1 4l4-1l-8 11l-1-5z" fill="#f59a23" stroke="#8a4a08" strokeWidth=".7" /><path d="M3 9l6-5l-3 5l5-2l-5 5z" fill="#ffe39a" /></Glyph>
          3. Kazım KOYUNCU ...
        </TaskButton>
        <TaskButton $ls={0.1}>
          <Glyph $w={15} $h={16} viewBox="0 0 15 16"><path d="M1 1h6v14H1z" fill="#f1dc7c" /><path d="M5 2h8v12H5z" fill="#e8c95a" /><path d="M4 3l5-2v13l-5 2z" fill="#fdf0ae" /></Glyph>
          Rich Dayı
        </TaskButton>
        <TaskButton $active $ls={0.22}>
          <AutocadIcon />
          AutoCAD 2009 - [TR...
        </TaskButton>
        <Tray>
          <Glyph $w={8} $h={9} viewBox="0 0 8 9"><path d="M6.500 1L2 4.500l4.500 3.500" fill="none" stroke="#e8f2f2" strokeWidth="1.800" /></Glyph>
          <Glyph $w={18} $h={15} viewBox="0 0 18 15"><path d="M1 2h8v7H1z" fill="#69c5f2" stroke="#d6eefa" strokeWidth=".8" /><path d="M3 10h4v2h2v1.500H1V12h2z" fill="#a6cdea" /><path d="M10 3q2 2 0 4M12.500 1.500q3 3.500 0 7M15 0q4 5 0 10" fill="none" stroke="#56d63c" strokeWidth="1.200" /></Glyph>
          17:49
        </Tray>
      </Taskbar>
    </Desktop>
  </>
);

export default App;
